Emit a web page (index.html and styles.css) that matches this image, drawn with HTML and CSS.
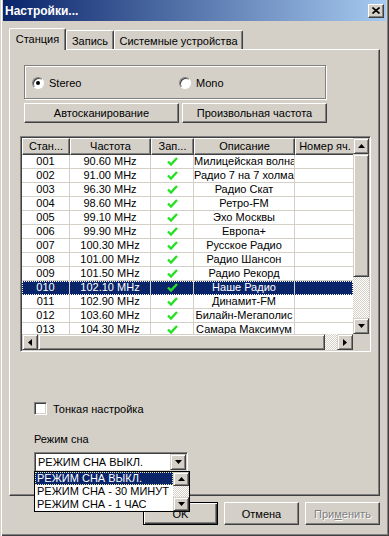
FILE: index.html
```html
<!DOCTYPE html>
<html lang="ru">
<head>
    <meta charset="UTF-8">
    <title>Настройки...</title>
    <link rel="stylesheet" href="styles.css">
</head>
<body>

<div class="window">

    <div class="titlebar">
        <span class="title">Настройки...</span>
        <span class="close-btn">
            <svg width="8" height="7" viewBox="0 0 8 7"><path d="M0.5 0.5 L7.5 6.5 M7.5 0.5 L0.5 6.5" stroke="#000" stroke-width="1.6"/></svg>
        </span>
    </div>

    <div class="dialog">

        <!-- Вкладки -->
        <div class="tabs">
            <div class="tab tab-active tab-station">Станция</div>
            <div class="tab tab-record">Запись</div>
            <div class="tab tab-devices">Системные устройства</div>
        </div>

        <div class="panel">

            <div class="group">
                <label class="radio radio-stereo"><span class="radio-dot checked"></span>Stereo</label>
                <label class="radio"><span class="radio-dot"></span>Mono</label>
            </div>

            <div class="btn-row">
                <div class="btn btn-scan">Автосканирование</div>
                <div class="btn btn-freq">Произвольная частота</div>
            </div>

            <!-- Список станций -->
            <div class="listview">
                <div class="lv-main">
                    <div class="lv-head">
                        <div class="hcell c1">Стан...</div>
                        <div class="hcell c2">Частота</div>
                        <div class="hcell c3">Зап...</div>
                        <div class="hcell c4">Описание</div>
                        <div class="hcell c5">Номер яч.</div>
                    </div>
                    <div class="lv-row"><div class="cell c1">001</div><div class="cell c2">90.60 MHz</div><div class="cell c3"><svg class="tick" width="11" height="9" viewBox="0 0 11 9"><path d="M1 4.5 L4 7.5 L10 1" fill="none" stroke="#22e022" stroke-width="2.4"/></svg></div><div class="cell c4">Милицейская волна</div><div class="cell c5"></div></div>
                    <div class="lv-row"><div class="cell c1">002</div><div class="cell c2">91.00 MHz</div><div class="cell c3"><svg class="tick" width="11" height="9" viewBox="0 0 11 9"><path d="M1 4.5 L4 7.5 L10 1" fill="none" stroke="#22e022" stroke-width="2.4"/></svg></div><div class="cell c4">Радио 7 на 7 холмах</div><div class="cell c5"></div></div>
                    <div class="lv-row"><div class="cell c1">003</div><div class="cell c2">96.30 MHz</div><div class="cell c3"><svg class="tick" width="11" height="9" viewBox="0 0 11 9"><path d="M1 4.5 L4 7.5 L10 1" fill="none" stroke="#22e022" stroke-width="2.4"/></svg></div><div class="cell c4">Радио Скат</div><div class="cell c5"></div></div>
                    <div class="lv-row"><div class="cell c1">004</div><div class="cell c2">98.60 MHz</div><div class="cell c3"><svg class="tick" width="11" height="9" viewBox="0 0 11 9"><path d="M1 4.5 L4 7.5 L10 1" fill="none" stroke="#22e022" stroke-width="2.4"/></svg></div><div class="cell c4">Ретро-FM</div><div class="cell c5"></div></div>
                    <div class="lv-row"><div class="cell c1">005</div><div class="cell c2">99.10 MHz</div><div class="cell c3"><svg class="tick" width="11" height="9" viewBox="0 0 11 9"><path d="M1 4.5 L4 7.5 L10 1" fill="none" stroke="#22e022" stroke-width="2.4"/></svg></div><div class="cell c4">Эхо Москвы</div><div class="cell c5"></div></div>
                    <div class="lv-row"><div class="cell c1">006</div><div class="cell c2">99.90 MHz</div><div class="cell c3"><svg class="tick" width="11" height="9" viewBox="0 0 11 9"><path d="M1 4.5 L4 7.5 L10 1" fill="none" stroke="#22e022" stroke-width="2.4"/></svg></div><div class="cell c4">Европа+</div><div class="cell c5"></div></div>
                    <div class="lv-row"><div class="cell c1">007</div><div class="cell c2">100.30 MHz</div><div class="cell c3"><svg class="tick" width="11" height="9" viewBox="0 0 11 9"><path d="M1 4.5 L4 7.5 L10 1" fill="none" stroke="#22e022" stroke-width="2.4"/></svg></div><div class="cell c4">Русское Радио</div><div class="cell c5"></div></div>
                    <div class="lv-row"><div class="cell c1">008</div><div class="cell c2">101.00 MHz</div><div class="cell c3"><svg class="tick" width="11" height="9" viewBox="0 0 11 9"><path d="M1 4.5 L4 7.5 L10 1" fill="none" stroke="#22e022" stroke-width="2.4"/></svg></div><div class="cell c4">Радио Шансон</div><div class="cell c5"></div></div>
                    <div class="lv-row"><div class="cell c1">009</div><div class="cell c2">101.50 MHz</div><div class="cell c3"><svg class="tick" width="11" height="9" viewBox="0 0 11 9"><path d="M1 4.5 L4 7.5 L10 1" fill="none" stroke="#22e022" stroke-width="2.4"/></svg></div><div class="cell c4">Радио Рекорд</div><div class="cell c5"></div></div>
                    <div class="lv-row selected"><div class="cell c1">010</div><div class="cell c2">102.10 MHz</div><div class="cell c3"><svg class="tick" width="11" height="9" viewBox="0 0 11 9"><path d="M1 4.5 L4 7.5 L10 1" fill="none" stroke="#22e022" stroke-width="2.4"/></svg></div><div class="cell c4">Наше Радио</div><div class="cell c5"></div></div>
                    <div class="lv-row"><div class="cell c1">011</div><div class="cell c2">102.90 MHz</div><div class="cell c3"><svg class="tick" width="11" height="9" viewBox="0 0 11 9"><path d="M1 4.5 L4 7.5 L10 1" fill="none" stroke="#22e022" stroke-width="2.4"/></svg></div><div class="cell c4">Динамит-FM</div><div class="cell c5"></div></div>
                    <div class="lv-row"><div class="cell c1">012</div><div class="cell c2">103.60 MHz</div><div class="cell c3"><svg class="tick" width="11" height="9" viewBox="0 0 11 9"><path d="M1 4.5 L4 7.5 L10 1" fill="none" stroke="#22e022" stroke-width="2.4"/></svg></div><div class="cell c4">Билайн-Мегаполис</div><div class="cell c5"></div></div>
                    <div class="lv-row"><div class="cell c1">013</div><div class="cell c2">104.30 MHz</div><div class="cell c3"><svg class="tick" width="11" height="9" viewBox="0 0 11 9"><path d="M1 4.5 L4 7.5 L10 1" fill="none" stroke="#22e022" stroke-width="2.4"/></svg></div><div class="cell c4">Самара Максимум</div><div class="cell c5"></div></div>
                </div>

                <div class="vscroll">
                    <div class="sb-btn"><svg width="7" height="4" viewBox="0 0 7 4"><path d="M3.5 0 L7 4 L0 4 Z"/></svg></div>
                    <div class="sb-thumb v-thumb"></div>
                    <div class="sb-track"></div>
                    <div class="sb-btn"><svg width="7" height="4" viewBox="0 0 7 4"><path d="M0 0 L7 0 L3.5 4 Z"/></svg></div>
                </div>
                <div class="hscroll">
                    <div class="sb-btn"><svg width="4" height="7" viewBox="0 0 4 7"><path d="M0 3.5 L4 0 L4 7 Z"/></svg></div>
                    <div class="sb-thumb h-thumb"></div>
                    <div class="sb-track"></div>
                    <div class="sb-btn"><svg width="4" height="7" viewBox="0 0 4 7"><path d="M0 0 L4 3.5 L0 7 Z"/></svg></div>
                </div>
                <div class="sb-corner"></div>
            </div>

            <label class="checkbox"><span class="check-box"></span>Тонкая настройка</label>

            <div class="caption">Режим сна</div>

            <!-- Выпадающий список, открытый -->
            <div class="combo">
                <div class="combo-text">РЕЖИМ СНА ВЫКЛ.</div>
                <div class="sb-btn combo-btn"><svg width="7" height="4" viewBox="0 0 7 4"><path d="M0 0 L7 0 L3.5 4 Z"/></svg></div>

                <div class="combo-list">
                    <div class="combo-items">
                        <div class="combo-item selected">РЕЖИМ СНА ВЫКЛ.</div>
                        <div class="combo-item">РЕЖИМ СНА - 30 МИНУТ</div>
                        <div class="combo-item">РЕЖИМ СНА - 1 ЧАС</div>
                    </div>
                    <div class="vscroll small">
                        <div class="sb-btn"><svg width="7" height="4" viewBox="0 0 7 4"><path d="M3.5 0 L7 4 L0 4 Z"/></svg></div>
                        <div class="sb-track"></div>
                        <div class="sb-btn"><svg width="7" height="4" viewBox="0 0 7 4"><path d="M0 0 L7 0 L3.5 4 Z"/></svg></div>
                    </div>
                </div>
            </div>

        </div>

        <div class="dlg-buttons">
            <div class="btn dlg-btn default">OK</div>
            <div class="btn dlg-btn">Отмена</div>
            <div class="btn dlg-btn disabled">При<u>м</u>енить</div>
        </div>

    </div>
</div>

</body>
</html>
```

FILE: styles.css
```css
* {
    margin: 0;
    padding: 0;
    box-sizing: border-box;
}

body {
    background: #d4d0c8;
    font-family: "Liberation Sans", Arial, sans-serif;
    font-size: 11px;
    color: #000;
}

/* Рамка окна */
.window {
    width: 389px;
    height: 536px;
    background: #d4d0c8;
    padding: 0 3px 3px 3px;
    box-shadow: inset 1px 0 #d4d0c8, inset 2px 0 #fff, inset -1px -1px #404040, inset -2px -2px #808080;
}

.titlebar {
    height: 21px;
    display: flex;
    align-items: center;
    justify-content: space-between;
    padding: 0 2px 0 2px;
    background: linear-gradient(to right, #0a246a, #a6caf0);
    color: #fff;
    font-weight: bold;
    font-size: 12px;
}

.close-btn {
    width: 16px;
    height: 14px;
    display: flex;
    align-items: center;
    justify-content: center;
    background: #d4d0c8;
    border: 1px solid;
    border-color: #fff #404040 #404040 #fff;
    box-shadow: inset -1px -1px #808080;
}

.dialog {
    padding: 7px 5px 0 6px;
}

/* Вкладки */
.tabs {
    display: flex;
    align-items: flex-end;
    height: 21px;
}

.tab {
    height: 19px;
    display: flex;
    align-items: center;
    justify-content: center;
    border-left: 1px solid #fff;
    border-top: 1px solid #fff;
    border-right: 1px solid #404040;
    border-radius: 2px 2px 0 0;
    box-shadow: inset -1px 0 #808080;
    padding-top: 1px;
}

.tab-active {
    height: 22px;
    margin-bottom: -1px;
    position: relative;
    z-index: 1;
    background: #d4d0c8;
    padding-top: 0;
    padding-bottom: 2px;
}

.tab-station { width: 57px; }
.tab-record { width: 48px; }
.tab-devices { width: 129px; }

.panel {
    position: relative;
    width: 371px;
    height: 447px;
    border: 1px solid;
    border-color: #fff #404040 #404040 #fff;
    box-shadow: inset -1px -1px #808080;
    padding: 15px 0 0 14px;
}

.group {
    width: 302px;
    height: 34px;
    border: 1px solid #808080;
    box-shadow: inset 1px 1px #fff, 1px 1px #fff;
    display: flex;
    align-items: center;
    padding: 2px 0 0 7px;
}

.radio {
    display: flex;
    align-items: center;
    gap: 5px;
}

.radio-stereo { width: 147px; }

.radio-dot {
    width: 12px;
    height: 12px;
    border-radius: 50%;
    background: #fff;
    border: 1px solid;
    border-color: #808080 #fff #fff #808080;
    box-shadow: inset 1px 1px #404040;
    display: flex;
    align-items: center;
    justify-content: center;
}

.radio-dot.checked::after {
    content: "";
    width: 4px;
    height: 4px;
    border-radius: 50%;
    background: #000;
}

.btn-row {
    display: flex;
    gap: 3px;
    margin-top: 4px;
}

.btn {
    height: 20px;
    display: flex;
    align-items: center;
    justify-content: center;
    background: #d4d0c8;
    border: 1px solid;
    border-color: #fff #404040 #404040 #fff;
    box-shadow: inset -1px -1px #808080;
}

.btn-scan { width: 155px; }
.btn-freq { width: 145px; }

/* Список станций */
.listview {
    width: 351px;
    height: 216px;
    margin: 13px 0 0 -4px;
    border: 1px solid;
    border-color: #808080 #fff #fff #808080;
    box-shadow: inset 1px 1px #404040, inset -1px -1px #d4d0c8;
    padding: 1px;
    display: grid;
    grid-template-columns: 331px 16px;
    grid-template-rows: 196px 16px;
    background: #fff;
}

.lv-main {
    overflow: hidden;
    background: #fff;
}

.lv-head, .lv-row {
    display: flex;
    white-space: nowrap;
}

.hcell {
    height: 17px;
    flex: none;
    display: flex;
    align-items: center;
    justify-content: center;
    background: #d4d0c8;
    border: 1px solid;
    border-color: #fff #404040 #404040 #fff;
    box-shadow: inset -1px -1px #808080;
    padding-bottom: 1px;
}

.c1 { width: 48px; }
.c2 { width: 81px; }
.c3 { width: 43px; }
.c4 { width: 101px; }
.c5 { width: 60px; }

.lv-row {
    height: 14px;
}

.cell {
    flex: none;
    height: 14px;
    line-height: 13px;
    text-align: center;
    overflow: hidden;
    border-right: 1px solid #d4d0c8;
    border-bottom: 1px solid #d4d0c8;
    display: flex;
    align-items: center;
    justify-content: center;
}

.cell.c4 {
    display: block;
}

.lv-row.selected {
    background: #0a246a;
    color: #fff;
    outline: 1px dotted #fff;
    outline-offset: -1px;
}

.lv-row.selected .cell {
    border-bottom-color: #0a246a;
}

/* Полосы прокрутки */
.vscroll {
    display: flex;
    flex-direction: column;
}

.hscroll {
    display: flex;
}

.sb-btn {
    width: 16px;
    height: 16px;
    flex: none;
    display: flex;
    align-items: center;
    justify-content: center;
    background: #d4d0c8;
    border: 1px solid;
    border-color: #d4d0c8 #404040 #404040 #d4d0c8;
    box-shadow: inset 1px 1px #fff, inset -1px -1px #808080;
}

.sb-thumb {
    background: #d4d0c8;
    border: 1px solid;
    border-color: #d4d0c8 #404040 #404040 #d4d0c8;
    box-shadow: inset 1px 1px #fff, inset -1px -1px #808080;
}

.v-thumb { height: 123px; }
.h-thumb { width: 287px; }

.sb-track {
    flex: 1;
    background: repeating-conic-gradient(#fff 0 25%, #d4d0c8 0 50%) 0 0 / 2px 2px;
}

.sb-corner {
    background: #d4d0c8;
}

.checkbox {
    display: flex;
    align-items: center;
    gap: 6px;
    margin: 50px 0 0 10px;
    height: 13px;
}

.check-box {
    width: 13px;
    height: 13px;
    background: #fff;
    border: 1px solid;
    border-color: #808080 #fff #fff #808080;
    box-shadow: inset 1px 1px #404040, inset -1px -1px #d4d0c8;
}

.caption {
    margin: 18px 0 0 10px;
    height: 13px;
    line-height: 13px;
}

/* Выпадающий список */
.combo {
    position: relative;
    width: 154px;
    height: 20px;
    margin: 6px 0 0 10px;
    background: #fff;
    border: 1px solid;
    border-color: #808080 #fff #fff #808080;
    box-shadow: inset 1px 1px #404040, inset -1px -1px #d4d0c8;
    padding: 1px;
    display: flex;
    align-items: center;
}

.combo-text {
    flex: 1;
    padding-left: 2px;
    font-size: 11px;
}

.combo-btn {
    height: 16px;
}

.combo-list {
    position: absolute;
    top: 100%;
    left: -1px;
    width: 156px;
    height: 41px;
    z-index: 10;
    background: #fff;
    border: 1px solid #000;
    display: flex;
}

.combo-items {
    flex: 1;
    min-width: 0;
    overflow: hidden;
}

.combo-item {
    height: 13px;
    line-height: 13px;
    padding-left: 2px;
    font-size: 11px;
    white-space: nowrap;
    overflow: hidden;
}

.combo-item.selected {
    background: #0a246a;
    color: #fff;
    outline: 1px dotted #e8e8a0;
    outline-offset: -1px;
}

.vscroll.small .sb-btn {
    height: 14px;
}

/* Кнопки диалога */
.dlg-buttons {
    display: flex;
    justify-content: flex-end;
    gap: 6px;
    margin-top: 6px;
    padding-right: 1px;
}

.dlg-btn {
    width: 75px;
    height: 23px;
}

.dlg-btn.default {
    border: 1px solid #000;
    box-shadow: inset 1px 1px #fff, inset -1px -1px #404040, inset -2px -2px #808080;
}

.dlg-btn.disabled {
    color: #808080;
    text-shadow: 1px 1px #fff;
}
```
